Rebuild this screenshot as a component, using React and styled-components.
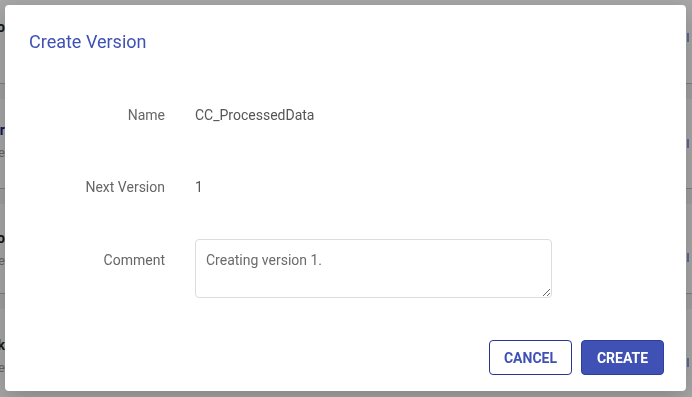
import React from "react";
import styled, { createGlobalStyle } from "styled-components";

const GlobalStyle = createGlobalStyle`
  html, body {
    margin: 0;
    padding: 0;
    background: #fff;
    font-family: Roboto, "Liberation Sans", Arial, sans-serif;
  }
  * {
    box-sizing: border-box;
  }
`;

const Page = styled.div`
  width: 692px;
  height: 397px;
  overflow: hidden;
  background: #fff;
`;

const ListRow = styled.div`
  display: flex;
  justify-content: space-between;
  height: ${p => p.h}px;
  border-bottom: ${p => (p.last ? "none" : "1px solid #c4c4c4")};
`;

const Band = styled.div`
  height: 15px;
  background: #f3f3f3;
`;

const RowText = styled.div`
  width: 5px;
  display: flex;
  flex-direction: column;
  align-items: flex-end;
  padding-top: ${p => p.top}px;
  white-space: nowrap;
`;

const RowTitle = styled.div`
  font-size: 14px;
  font-weight: 700;
  color: ${p => p.color || "#222"};
  line-height: 18px;
`;

const RowSub = styled.div`
  margin-top: 5px;
  font-size: 13px;
  color: #9a9a9a;
  line-height: 18px;
`;

const Marker = styled.div`
  width: 2px;
  height: 9px;
  margin-top: ${p => p.top}px;
  margin-right: 3px;
  background: #8aa4e6;
`;

const Overlay = styled.div`
  position: fixed;
  inset: 0;
  background: rgba(0, 0, 0, 0.35);
  padding: 5px 6px 6px 5px;
`;

const Dialog = styled.div`
  width: 681px;
  height: 386px;
  background: #fff;
  border-radius: 4px;
  box-shadow: 0 8px 24px rgba(0, 0, 0, 0.2);
  padding: 25px 22px 16px 24px;
  display: flex;
  flex-direction: column;
`;

const Title = styled.h2`
  margin: 0;
  font-size: 18px;
  font-weight: 400;
  line-height: 24px;
  color: #3f51b5;
`;

const Field = styled.div`
  display: grid;
  grid-template-columns: 136px 1fr;
  column-gap: 30px;
  margin-top: ${p => p.gap}px;
  font-size: 14px;
  line-height: 20px;
`;

const Label = styled.div`
  text-align: right;
  color: #666;
  padding-top: ${p => p.offset || 0}px;
`;

const Value = styled.div`
  color: #555;
`;

const Comment = styled.textarea`
  display: block;
  width: 357px;
  height: 59px;
  padding: 10px 10px;
  border: 1px solid #dcdcdc;
  border-radius: 4px;
  font-family: Roboto, "Liberation Sans", Arial, sans-serif;
  font-size: 14px;
  line-height: 20px;
  color: #6b6b6b;
  resize: vertical;
  outline: none;
`;

const Footer = styled.div`
  display: flex;
  justify-content: flex-end;
  gap: 9px;
  margin-top: auto;
`;

const Button = styled.button`
  height: 35px;
  min-width: 83px;
  padding: 0 14px;
  border-radius: 4px;
  border: 1px solid ${p => (p.primary ? "#2f3e9e" : "#283593")};
  background: ${p => (p.primary ? "#3f51b5" : "#fff")};
  color: ${p => (p.primary ? "#fff" : "#3f51b5")};
  font-family: Roboto, "Liberation Sans", Arial, sans-serif;
  font-size: 14px;
  font-weight: 700;
  text-transform: uppercase;
  cursor: pointer;
`;

const rows = [
  { h: 84, top: 18, title: "o", marker: 33 },
  { h: 90, top: 22, title: "r", sub: "e", marker: 40, color: "#1a237e" },
  { h: 90, top: 25, title: "o", sub: "e", marker: 49 },
  { h: 90, top: 27, title: "k", sub: "e", marker: 49, color: "#3a2a10", last: true }
];

export default function App() {
  return (
    <Page>
      <GlobalStyle />
      {rows.map((r, i) => (
        <React.Fragment key={i}>
          <ListRow h={r.h} last={r.last}>
            <RowText top={r.top}>
              <RowTitle color={r.color}>{r.title}</RowTitle>
              {r.sub && <RowSub>{r.sub}</RowSub>}
            </RowText>
            <Marker top={r.marker} />
          </ListRow>
          {!r.last && <Band />}
        </React.Fragment>
      ))}
      <Overlay>
        <Dialog>
          <Title>Create Version</Title>
          <Field gap={51}>
            <Label>Name</Label>
            <Value>CC_ProcessedData</Value>
          </Field>
          <Field gap={52}>
            <Label>Next Version</Label>
            <Value>1</Value>
          </Field>
          <Field gap={42}>
            <Label offset={11}>Comment</Label>
            <Comment defaultValue="Creating version 1." />
          </Field>
          <Footer>
            <Button>Cancel</Button>
            <Button primary>Create</Button>
          </Footer>
        </Dialog>
      </Overlay>
    </Page>
  );
}
